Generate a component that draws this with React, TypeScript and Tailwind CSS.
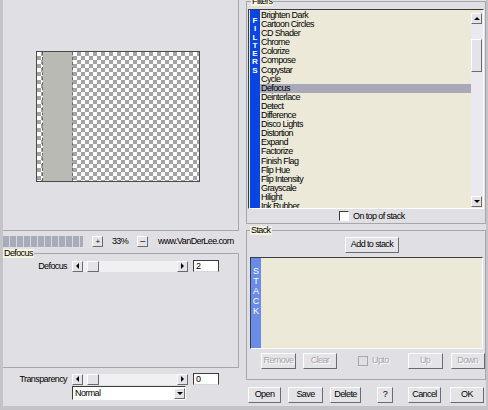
import React from "react";

const filters = [
  "Brighten Dark",
  "Cartoon Circles",
  "CD Shader",
  "Chrome",
  "Colorize",
  "Compose",
  "Copystar",
  "Cycle",
  "Defocus",
  "Deinterlace",
  "Detect",
  "Difference",
  "Disco Lights",
  "Distortion",
  "Expand",
  "Factorize",
  "Finish Flag",
  "Flip Hue",
  "Flip Intensity",
  "Grayscale",
  "Hilight",
  "Ink Rubber",
];

const raised =
  "bg-[#e4e3e7] border border-t-white border-l-white border-r-[#6a6a70] border-b-[#6a6a70]";
const sunken =
  "border border-t-[#3c3c40] border-l-[#3c3c40] border-r-white border-b-white";
const checker =
  "bg-[image:conic-gradient(#a4a4a4_25%,#fff_0_50%,#a4a4a4_0_75%,#fff_0)] bg-[length:8px_8px]";

function Tri({ dir }: { dir: "left" | "right" | "up" | "down" }) {
  const pts = {
    left: "4,0 4,6 1,3",
    right: "1,0 1,6 4,3",
    up: "0,4 6,4 3,1",
    down: "0,1 6,1 3,4",
  }[dir];
  const horiz = dir === "left" || dir === "right";
  return (
    <svg width={horiz ? 5 : 6} height={horiz ? 6 : 5} viewBox={horiz ? "0 0 5 6" : "0 0 6 5"}>
      <polygon points={pts} fill="#000" />
    </svg>
  );
}

function ArrowBtn({ dir }: { dir: "left" | "right" | "up" | "down" }) {
  return (
    <div className={`${raised} w-[11px] h-[11px] flex items-center justify-center shrink-0`}>
      <Tri dir={dir} />
    </div>
  );
}

function HScroll() {
  return (
    <div className="flex h-[11px] w-[116px]">
      <ArrowBtn dir="left" />
      <div className="flex-1 flex pl-[4px] bg-[#f0f0f3]">
        <div className={`${raised} w-[12px] h-full`} />
      </div>
      <ArrowBtn dir="right" />
    </div>
  );
}

function Edit({ value }: { value: string }) {
  return (
    <div className="w-[26px] h-[12px] bg-white border border-[#3c3c40] border-b-[#d8d8dc] pl-[2px] leading-[10px]">
      {value}
    </div>
  );
}

function Btn({ label, w, disabled, className = "" }: { label: string; w: number; disabled?: boolean; className?: string }) {
  return (
    <div
      className={`${raised} h-[16px] flex items-center justify-center shrink-0 ${
        disabled ? "text-[#a6a5aa] [text-shadow:1px_1px_0_#fff]" : ""
      } ${className}`}
      style={{ width: w }}
    >
      {label}
    </div>
  );
}

function GroupLabel({ text, className = "" }: { text: string; className?: string }) {
  return (
    <div className={`-mt-[5px] w-fit bg-[#f6f3de] leading-[9px] px-[1px] ${className}`}>{text}</div>
  );
}

function LeftColumn() {
  return (
    <div className="w-[236px] flex flex-col shrink-0">
      {/* preview */}
      <div className="h-[231px] border-r border-b border-[#a6a6ab] pl-[33px] pt-[51px]">
        <div className="w-[164px] h-[131px] border border-[#4a4a4a] flex bg-white">
          <div className={`w-[6px] h-full border-r border-dashed border-[#666] ${checker}`} />
          <div className="w-[30px] h-full bg-[#b9bab3] border-r border-dashed border-[#6c6c6c]" />
          <div className={`flex-1 h-full ${checker}`} />
        </div>
      </div>

      {/* zoom row */}
      <div className="mt-[5px] h-[11px] flex items-center">
        <div className="w-[80px] h-[11px] bg-[image:repeating-linear-gradient(90deg,#a8acba_0_6px,#d8d8e0_6px_7px)]" />
        <div className={`${raised} ml-[9px] w-[11px] h-[11px] flex items-center justify-center leading-none text-[8px]`}>+</div>
        <div className="w-[34px] text-center leading-[11px]">33%</div>
        <div className={`${raised} w-[11px] h-[11px] flex items-center justify-center leading-none`}>–</div>
        <div className="ml-[10px] leading-[11px]">www.VanDerLee.com</div>
      </div>

      {/* Defocus group */}
      <div className="mt-[6px] h-[115px] w-[236px] border-t border-r border-b border-[#a6a6ab]">
        <GroupLabel text="Defocus" />
        <div className="mt-[2px] flex items-center h-[12px]">
          <div className="w-[64px] text-right leading-[11px]">Defocus</div>
          <div className="ml-[5px]">
            <HScroll />
          </div>
          <div className="ml-[5px]">
            <Edit value="2" />
          </div>
        </div>
      </div>

      {/* Transparency */}
      <div className="mt-[5px] flex items-center h-[12px]">
        <div className="w-[64px] text-right leading-[11px]">Transparency</div>
        <div className="ml-[5px]">
          <HScroll />
        </div>
        <div className="ml-[5px]">
          <Edit value="0" />
        </div>
      </div>
      <div className={`ml-[69px] mt-[1px] w-[114px] h-[14px] bg-white ${sunken} flex items-center`}>
        <div className="flex-1 pl-[2px] leading-[12px]">Normal</div>
        <ArrowBtn dir="down" />
      </div>
    </div>
  );
}

function RightColumn() {
  return (
    <div className="ml-[7px] w-[240px] flex flex-col shrink-0">
      {/* Filters group */}
      <div className="mt-[1px] h-[223px] border border-[#a6a6ab]">
        <GroupLabel text="Filters" className="ml-[4px]" />
        <div className={`mt-[3px] ml-[1px] w-[236px] h-[200px] bg-[#ece9d8] ${sunken} flex`}>
          <div className="ml-[1px] w-[10px] h-full bg-[#0846e4] flex flex-col items-center pt-[7px] text-white font-bold text-[8px] leading-[8.3px] tracking-normal">
            {"FILTERS".split("").map((c, i) => (
              <span key={i}>{c}</span>
            ))}
          </div>
          <div className="flex-1 flex flex-col pt-[1px] overflow-hidden">
            {filters.map((f) => (
              <div
                key={f}
                className={`h-[9.1px] leading-[9.1px] pl-[1px] shrink-0 whitespace-nowrap ${
                  f === "Defocus" ? "bg-[#a8a8b8]" : ""
                }`}
              >
                {f}
              </div>
            ))}
          </div>
          <div className="w-[12px] h-full flex flex-col pt-[3px] pb-[1px]">
            <ArrowBtn dir="up" />
            <div className="flex-1 bg-[#e9e9ef] flex flex-col pt-[15px]">
              <div className={`${raised} w-[11px] h-[33px]`} />
            </div>
            <ArrowBtn dir="down" />
          </div>
        </div>
        <div className="mt-[2px] pl-[92px] flex items-center h-[10px]">
          <div className={`w-[10px] h-[10px] bg-white ${sunken}`} />
          <div className="ml-[4px] leading-[10px]">On top of stack</div>
        </div>
      </div>

      {/* Stack group */}
      <div className="mt-[6px] h-[150px] border border-[#a6a6ab]">
        <GroupLabel text="Stack" className="ml-[3px]" />
        <div className="mt-[2px] pl-[98px] flex">
          <Btn label="Add to stack" w={54} />
        </div>
        <div className={`mt-[4px] ml-[3px] w-[233px] h-[92px] bg-[#ece9d8] ${sunken} flex`}>
          <div className="w-[10px] h-full bg-[#6b8be8] flex flex-col items-center pt-[8px] text-white text-[9px] leading-[10px] tracking-normal">
            {"STACK".split("").map((c, i) => (
              <span key={i}>{c}</span>
            ))}
          </div>
        </div>
        <div className="mt-[4px] flex items-center h-[16px]">
          <Btn label="Remove" w={35} disabled className="ml-[14px]" />
          <Btn label="Clear" w={34} disabled className="ml-[7px]" />
          <div className="ml-[21px] w-[10px] h-[10px] border border-[#a6a5aa] bg-[#e0dfe3]" />
          <div className="ml-[4px] text-[#a6a5aa] [text-shadow:1px_1px_0_#fff]">Upto</div>
          <Btn label="Up" w={35} disabled className="ml-[19px]" />
          <Btn label="Down" w={34} disabled className="ml-[8px]" />
        </div>
      </div>

      {/* bottom buttons */}
      <div className="mt-[7px] flex items-center h-[16px]">
        <Btn label="Open" w={33} className="ml-[2px]" />
        <Btn label="Save" w={35} className="ml-[7px]" />
        <Btn label="Delete" w={31} className="ml-[7px]" />
        <Btn label="?" w={16} className="ml-[16px]" />
        <Btn label="Cancel" w={33} className="ml-[15px]" />
        <Btn label="OK" w={34} className="ml-[9px]" />
      </div>
    </div>
  );
}

export default function App() {
  return (
    <div className="w-[488px] h-[410px] overflow-hidden bg-[#e0dfe3] border-l-[3px] border-r-[2px] border-b-[4px] border-t-0 border-[#c4c3c8] flex font-['Liberation_Sans',Arial,sans-serif] text-[9px] text-black tracking-[-0.6px]">
      <LeftColumn />
      <RightColumn />
    </div>
  );
}
